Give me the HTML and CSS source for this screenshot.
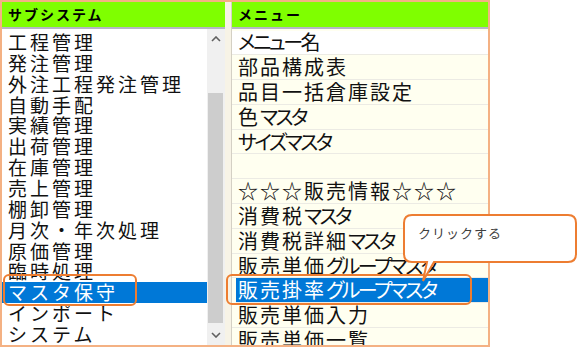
FILE: index.html
```html
<!DOCTYPE html>
<html lang="ja">
<head>
  <meta charset="UTF-8">
  <title>メニュー選択</title>
  <link rel="stylesheet" href="styles.css">
</head>
<body>

  <div class="screen">
    <div class="pane pane-sub">
      <div class="pane-head">サブシステム</div>
      <div class="pane-body">
        <ul class="list list-sub">
          <li>工程管理</li>
          <li>発注管理</li>
          <li>外注工程発注管理</li>
          <li>自動手配</li>
          <li>実績管理</li>
          <li>出荷管理</li>
          <li>在庫管理</li>
          <li>売上管理</li>
          <li>棚卸管理</li>
          <li>月次・年次処理</li>
          <li>原価管理</li>
          <li>臨時処理</li>
          <li class="selected">マスタ保守</li>
          <li>インポート</li>
          <li>システム</li>
        </ul>
        <div class="scrollbar">
          <div class="scroll-btn">
            <svg width="10" height="6" viewBox="0 0 10 6"><path d="M1 5 L5 1 L9 5" fill="none" stroke="#606060" stroke-width="1.6"/></svg>
          </div>
          <div class="scroll-track"><div class="scroll-thumb"></div></div>
          <div class="scroll-btn">
            <svg width="10" height="6" viewBox="0 0 10 6"><path d="M1 1 L5 5 L9 1" fill="none" stroke="#606060" stroke-width="1.6"/></svg>
          </div>
        </div>
      </div>
    </div>

    <div class="pane pane-menu">
      <div class="pane-head">メニュー</div>
      <ul class="list list-menu">
        <li class="title"><span class="kana">メニュー</span>名</li>
        <li>部品構成表</li>
        <li>品目一括倉庫設定</li>
        <li>色<span class="kana">マスタ</span></li>
        <li><span class="kana">サイズマスタ</span></li>
        <li></li>
        <li>☆☆☆販売情報☆☆☆</li>
        <li>消費税<span class="kana">マスタ</span></li>
        <li>消費税詳細<span class="kana">マスタ</span></li>
        <li>販売単価<span class="kana">グループマスタ</span></li>
        <li class="selected">販売掛率<span class="kana">グループマスタ</span></li>
        <li>販売単価入力</li>
        <li>販売単価一覧</li>
      </ul>
    </div>
  </div>

  <!-- annotations drawn over the screenshot -->
  <div class="mark mark-sub"></div>
  <div class="mark mark-menu"></div>
  <svg class="callout" width="579" height="349" viewBox="0 0 579 349">
    <path d="M412 215 H568 Q576 215 576 223 V254 Q576 262 568 262 H434 L423 281 L427 262 H412 Q404 262 404 254 V223 Q404 215 412 215 Z"
          fill="#fff" stroke="#ed7d31" stroke-width="2"/>
  </svg>
  <div class="callout-text">クリックする</div>

</body>
</html>
```

FILE: styles.css
```css
body {
  margin: 0;
  background-color: #fff;
  font-family: "Noto Sans CJK JP", "Noto Sans", sans-serif;
  color: #111;
  position: relative;
  width: 579px;
  height: 349px;
  overflow: hidden;
}

.screen {
  display: flex;
  width: 490px;
  height: 347px;
  box-sizing: border-box;
  border: 2px solid #f4b183;
  background-color: #f7f3e6;
}

.pane {
  display: flex;
  flex-direction: column;
  overflow: hidden;
}

.pane-sub {
  width: 223px;
}

.pane-menu {
  flex: 1;
  margin-left: 6px;
  border-left: 1px solid #d4d0c4;
}

.pane-head {
  height: 25px;
  flex: none;
  background-color: #7fff00; /* chartreuse header */
  border-bottom: 2px solid #b6b6c4;
  padding-left: 6px;
  font-size: 14px;
  font-weight: bold;
  letter-spacing: 2px;
  line-height: 25px;
  color: #000;
}

.pane-body {
  flex: 1;
  display: flex;
  min-height: 0;
}

.list {
  list-style: none;
  margin: 0;
  padding: 0;
}

.list li {
  display: flex;
  align-items: center;
  white-space: nowrap;
  box-sizing: border-box;
}

.list-sub {
  flex: 1;
  background-color: #fff;
  padding-top: 2.5px;
  font-size: 19px;
  line-height: 20px;
  letter-spacing: 3px;
}

.list-sub li {
  height: 20.86px;
  padding-left: 6px;
}

.list-menu {
  flex: 1;
  padding-top: 1.5px;
  background-color: #fffff0;
  font-size: 20px;
  line-height: 22px;
  letter-spacing: 2px;
  font-feature-settings: "palt";
}

.list-menu li {
  height: 24.8px;
  padding-left: 6px;
  border-bottom: 1px solid #ecebe4;
}

/* katakana is set narrower than kanji in this list */
.list-menu .kana {
  letter-spacing: -2.5px;
}

.list-menu li.title {
  background-color: #fff;
}

.list li.selected {
  background-color: #0078d7;
  color: #fff;
}

.list-menu li.selected {
  margin-left: 4px;
  padding-left: 2px;
}

/* scrollbar of the subsystem list */
.scrollbar {
  width: 18px;
  flex: none;
  display: flex;
  flex-direction: column;
  background-color: #f0f0f0;
}

.scroll-btn {
  height: 20px;
  display: flex;
  align-items: center;
  justify-content: center;
}

.scroll-track {
  flex: 1;
  padding: 44px 2px 2px 1px;
}

.scroll-thumb {
  height: 230px;
  background-color: #cdcdcd;
}

/* orange annotation frames */
.mark {
  position: absolute;
  box-sizing: border-box;
  border: 2.5px solid #ed7d31;
  border-radius: 6px;
}

.mark-sub {
  left: 3px;
  top: 274px;
  width: 134px;
  height: 32px;
}

.mark-menu {
  left: 226px;
  top: 274px;
  width: 246px;
  height: 31px;
}

.callout {
  position: absolute;
  left: 0;
  top: 0;
}

.callout-text {
  position: absolute;
  left: 418px;
  top: 224px;
  font-size: 13px;
  letter-spacing: 1px;
  line-height: 18px;
  color: #404040;
}
```
